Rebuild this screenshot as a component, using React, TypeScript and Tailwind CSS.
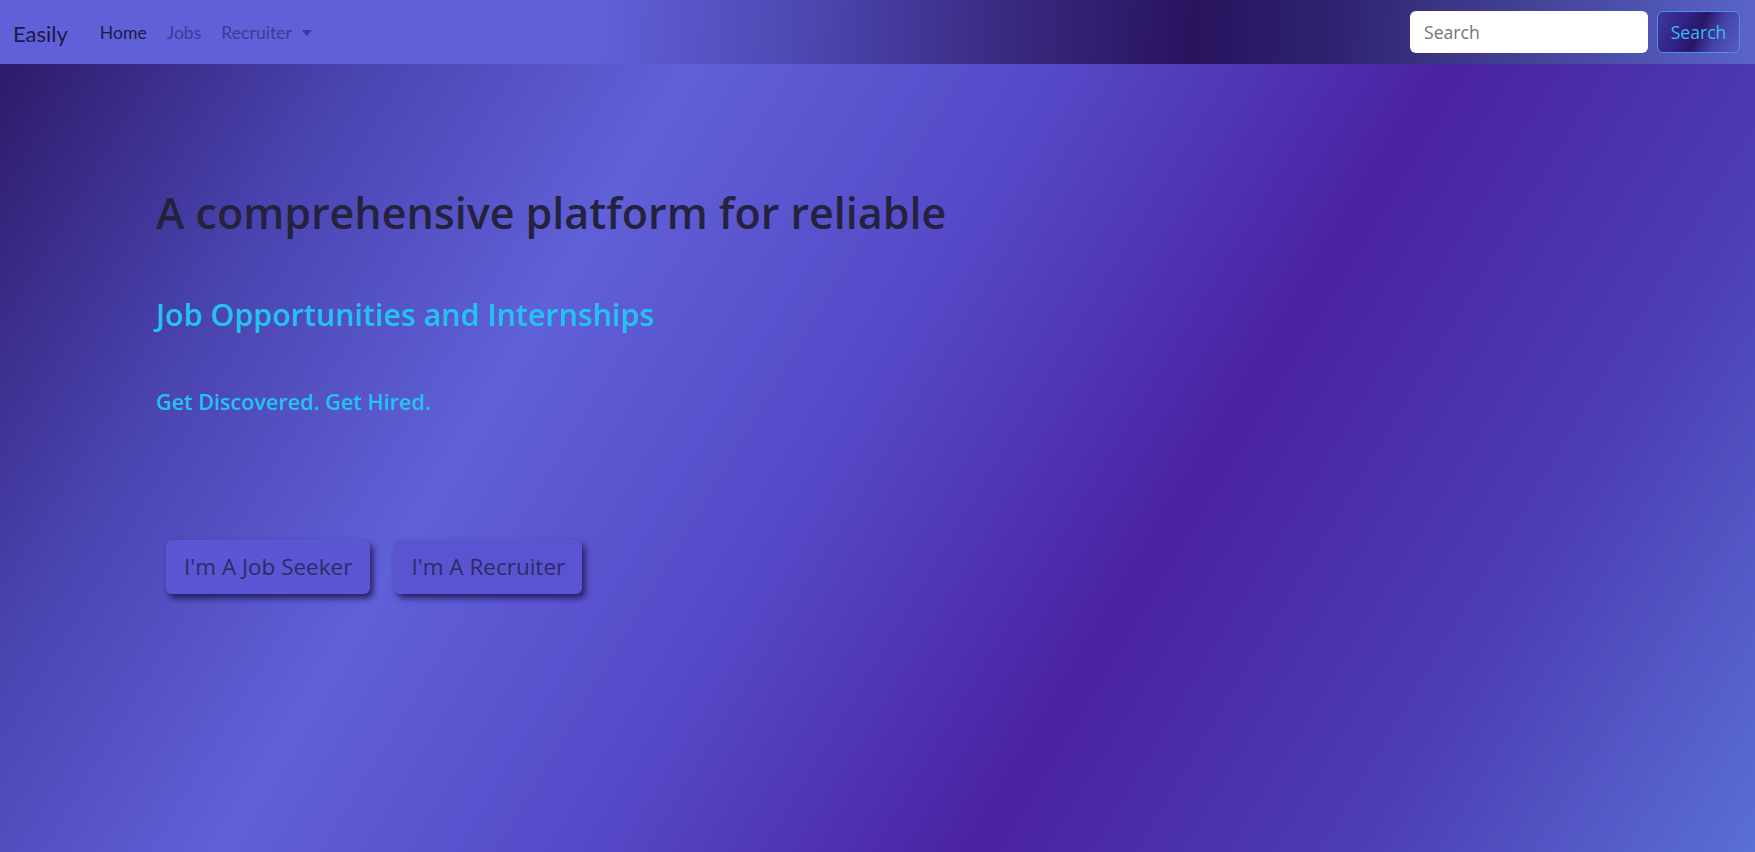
import { useState } from "react";

export default function App() {
  const [query, setQuery] = useState("");

  return (
    <div className="min-h-screen flex flex-col font-['Lato','Liberation_Sans',sans-serif]">
      {/* Top navbar */}
      <nav className="h-16 flex items-center justify-between pl-[13px] pr-[15px] bg-[linear-gradient(93deg,#6060d8_0%,#6060d8_34%,#4d47b0_46%,#38287e_58%,#28135e_68%,#2e2370_76%,#3a3585_82%,#5a64c8_100%)]">
        <div className="flex items-center pt-[2px]">
          <span className="text-[22px] text-[#1b1a45] mr-[24px]">Easily</span>
          <a className="text-[17.6px] text-[#1d1b48] pl-[8px] pr-[10px]">Home</a>
          <a className="text-[17.6px] text-[#3e3b98] px-[10px]">Jobs</a>
          <a className="text-[17.6px] text-[#3e3b98] px-[10px] flex items-center gap-[10px]">
            Recruiter
            <span className="w-0 h-0 border-l-[5px] border-r-[5px] border-t-[6px] border-l-transparent border-r-transparent border-t-[#3e3b98]"></span>
          </a>
        </div>
        <form className="flex items-center gap-[9px]" onSubmit={(e) => e.preventDefault()}>
          <input
            type="text"
            placeholder="Search"
            value={query}
            onChange={(e) => setQuery(e.target.value)}
            className="w-[238px] h-[42px] rounded-md bg-white px-[14px] text-[17.6px] font-['Open_Sans',sans-serif] text-[#212529] placeholder-[#6c757d] outline-none"
          />
          <button
            type="submit"
            className="w-[83px] h-[42px] rounded-md border border-[#4e8ef2] text-[17.6px] font-['Open_Sans',sans-serif] text-[#38bdf2] bg-[linear-gradient(115deg,#3b3a9e_0%,#2f2080_35%,#2a1566_50%,#4442a8_70%,#5a5ac4_100%)]"
          >
            Search
          </button>
        </form>
      </nav>

      {/* Hero */}
      <main className="flex-1 pt-[123px] pl-[156px] bg-[linear-gradient(121deg,#2e1a6a_0%,#4a44b0_16%,#6060d8_31%,#5548c6_48%,#4a22a3_65%,#4c3db2_82%,#5a6fd6_100%)] font-['Open_Sans',sans-serif]">
        <h1 className="text-[43px] leading-[1.2] font-semibold text-[#25223d]">
          A comprehensive platform for reliable
        </h1>
        <h3 className="mt-[58px] text-[30.4px] leading-[1.2] font-semibold text-[#22c3f0]">
          Job Opportunities and Internships
        </h3>
        <h5 className="mt-[56px] text-[21.6px] leading-[1.2] font-semibold text-[#22c3f0]">
          Get Discovered. Get Hired.
        </h5>
        <div className="mt-[125px] ml-[10px] flex gap-[24px]">
          <button className="h-[54px] px-[18px] rounded-md bg-[#5a56d4] text-[22.5px] text-[#2e2b64] shadow-[3px_4px_6px_rgba(20,10,60,0.75)]">
            I'm A Job Seeker
          </button>
          <button className="h-[54px] px-[17px] rounded-md bg-[#5a54d2] text-[22.5px] text-[#2e2b64] shadow-[3px_4px_6px_rgba(20,10,60,0.75)]">
            I'm A Recruiter
          </button>
        </div>
      </main>
    </div>
  );
}
